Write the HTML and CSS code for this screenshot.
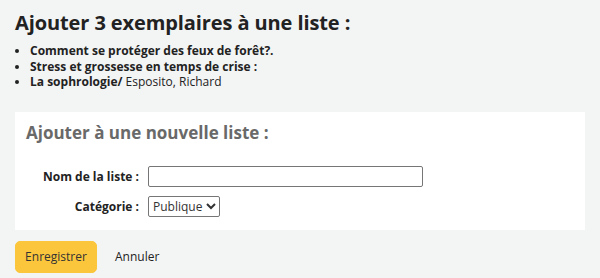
FILE: index.html
```html
<!DOCTYPE html>
<html lang="fr">
<head>
    <meta charset="UTF-8">
    <title>Ajouter à une liste</title>
    <link rel="stylesheet" href="styles.css">
</head>
<body>

<div class="main">
    <h1>Ajouter 3 exemplaires à une liste :</h1>
    <ul class="biblio-list">
        <li><span class="title">Comment se protéger des feux de forêt?.</span></li>
        <li><span class="title">Stress et grossesse en temps de crise :</span></li>
        <li><span class="title">La sophrologie/</span> Esposito, Richard</li>
    </ul>

    <form>
        <fieldset class="rows">
            <h2>Ajouter à une nouvelle liste :</h2>
            <ol>
                <li>
                    <label for="listname">Nom de la liste :</label>
                    <input type="text" id="listname" class="text-input">
                </li>
                <li>
                    <label for="category">Catégorie :</label>
                    <select id="category">
                        <option>Publique</option>
                        <option>Privée</option>
                    </select>
                </li>
            </ol>
        </fieldset>
        <div class="action">
            <button type="submit" class="btn-primary">Enregistrer</button>
            <a href="#" class="cancel">Annuler</a>
        </div>
    </form>
</div>

</body>
</html>
```

FILE: styles.css
```css
body {
    font-family: 'Open Sans', sans-serif;
    background: #f3f4f4;
    color: #222;
    margin: 0;
    padding: 0;
}

.main {
    padding: 0 15px;
}

h1 {
    font-size: 20px;
    font-weight: bold;
    margin: 0;
    padding-top: 8px;
    line-height: 30px;
    letter-spacing: -0.1px;
}

.biblio-list {
    margin: 5px 0 0 0;
    padding-left: 15px;
    font-size: 12px;
    line-height: 15.5px;
}
.biblio-list li {
    color: #222;
}
.biblio-list .title {
    font-weight: bold;
}

fieldset.rows {
    background: #fff;
    border: none;
    margin: 22px 0 0 0;
    padding: 9px 11px 13px;
}
fieldset.rows h2 {
    font-size: 17px;
    color: #696969;
    margin: 0;
    line-height: 24px;
}
fieldset.rows ol {
    list-style: none;
    margin: 21px 0 0 0;
    padding: 0;
}
fieldset.rows li {
    display: flex;
    align-items: center;
    margin-bottom: 9px;
}
fieldset.rows li:last-child {
    margin-bottom: 0;
}
fieldset.rows label {
    width: 113px;
    text-align: right;
    font-weight: bold;
    font-size: 12px;
    margin-right: 9px;
}
.text-input {
    width: 271px;
    height: 17px;
    border: 1px solid #767676;
    border-radius: 2px;
    padding: 1px;
}
select {
    font-family: 'Open Sans', sans-serif;
    font-size: 12px;
    height: 21px;
    border: 1px solid #767676;
    border-radius: 2px;
    background: #fff;
    color: #333;
}

.action {
    display: flex;
    align-items: center;
    margin-top: 11px;
}
.btn-primary {
    background: #fbc63c;
    color: #333;
    border: 1px solid #fbc63c;
    border-radius: 5px;
    font-family: 'Open Sans', sans-serif;
    font-size: 12px;
    width: 82px;
    height: 32px;
    padding: 0;
    cursor: pointer;
}
.cancel {
    color: #222;
    text-decoration: none;
    font-size: 12px;
    margin-left: 18px;
}
```
